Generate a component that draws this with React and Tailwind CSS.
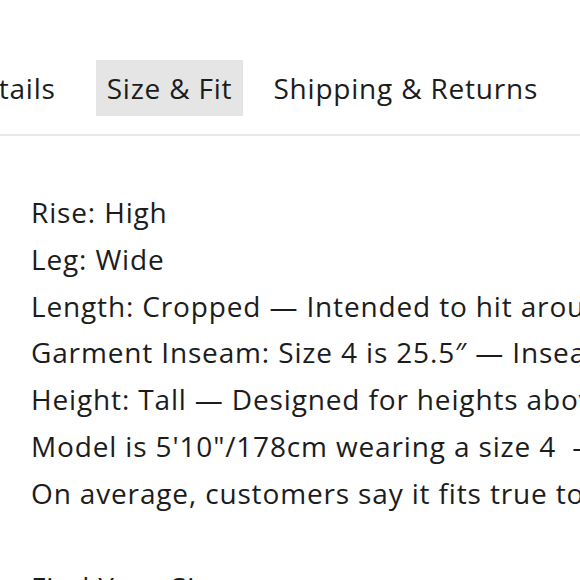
export default function App() {
  const lines = [
    "Rise: High",
    "Leg: Wide",
    "Length: Cropped — Intended to hit around the ankle",
    "Garment Inseam: Size 4 is 25.5″ — Inseam varies by size",
    "Height: Tall — Designed for heights above 5'8\"",
    "Model is 5'10\"/178cm wearing a size 4  — Measurements",
    "On average, customers say it fits true to size",
  ];
  return (
    <div className="w-[580px] h-[580px] overflow-hidden bg-white text-[#1c1c1c]" style={{ fontFamily: '"Open Sans", sans-serif' }}>
      <div className="pt-[60px] flex items-center whitespace-nowrap text-[28px] tracking-[0.8px] ml-[-50px]">
        <div className="px-[11px] h-[56px] flex items-center">Details</div>
        <div className="ml-[29px] px-[11px] h-[56px] flex items-center bg-[#e5e5e5]">Size &amp; Fit</div>
        <div className="ml-[19px] px-[11px] h-[56px] flex items-center">Shipping &amp; Returns</div>
      </div>
      <div className="mt-[18px] h-[2px] bg-[#e8e8e8]" />
      <div className="pt-[53px] pl-[31px] whitespace-pre text-[28px] tracking-[0.85px] leading-[46.8px]">
        {lines.map((l) => (
          <div key={l}>{l}</div>
        ))}
        <div className="mt-[47px]">Find Your Size</div>
      </div>
    </div>
  );
}
